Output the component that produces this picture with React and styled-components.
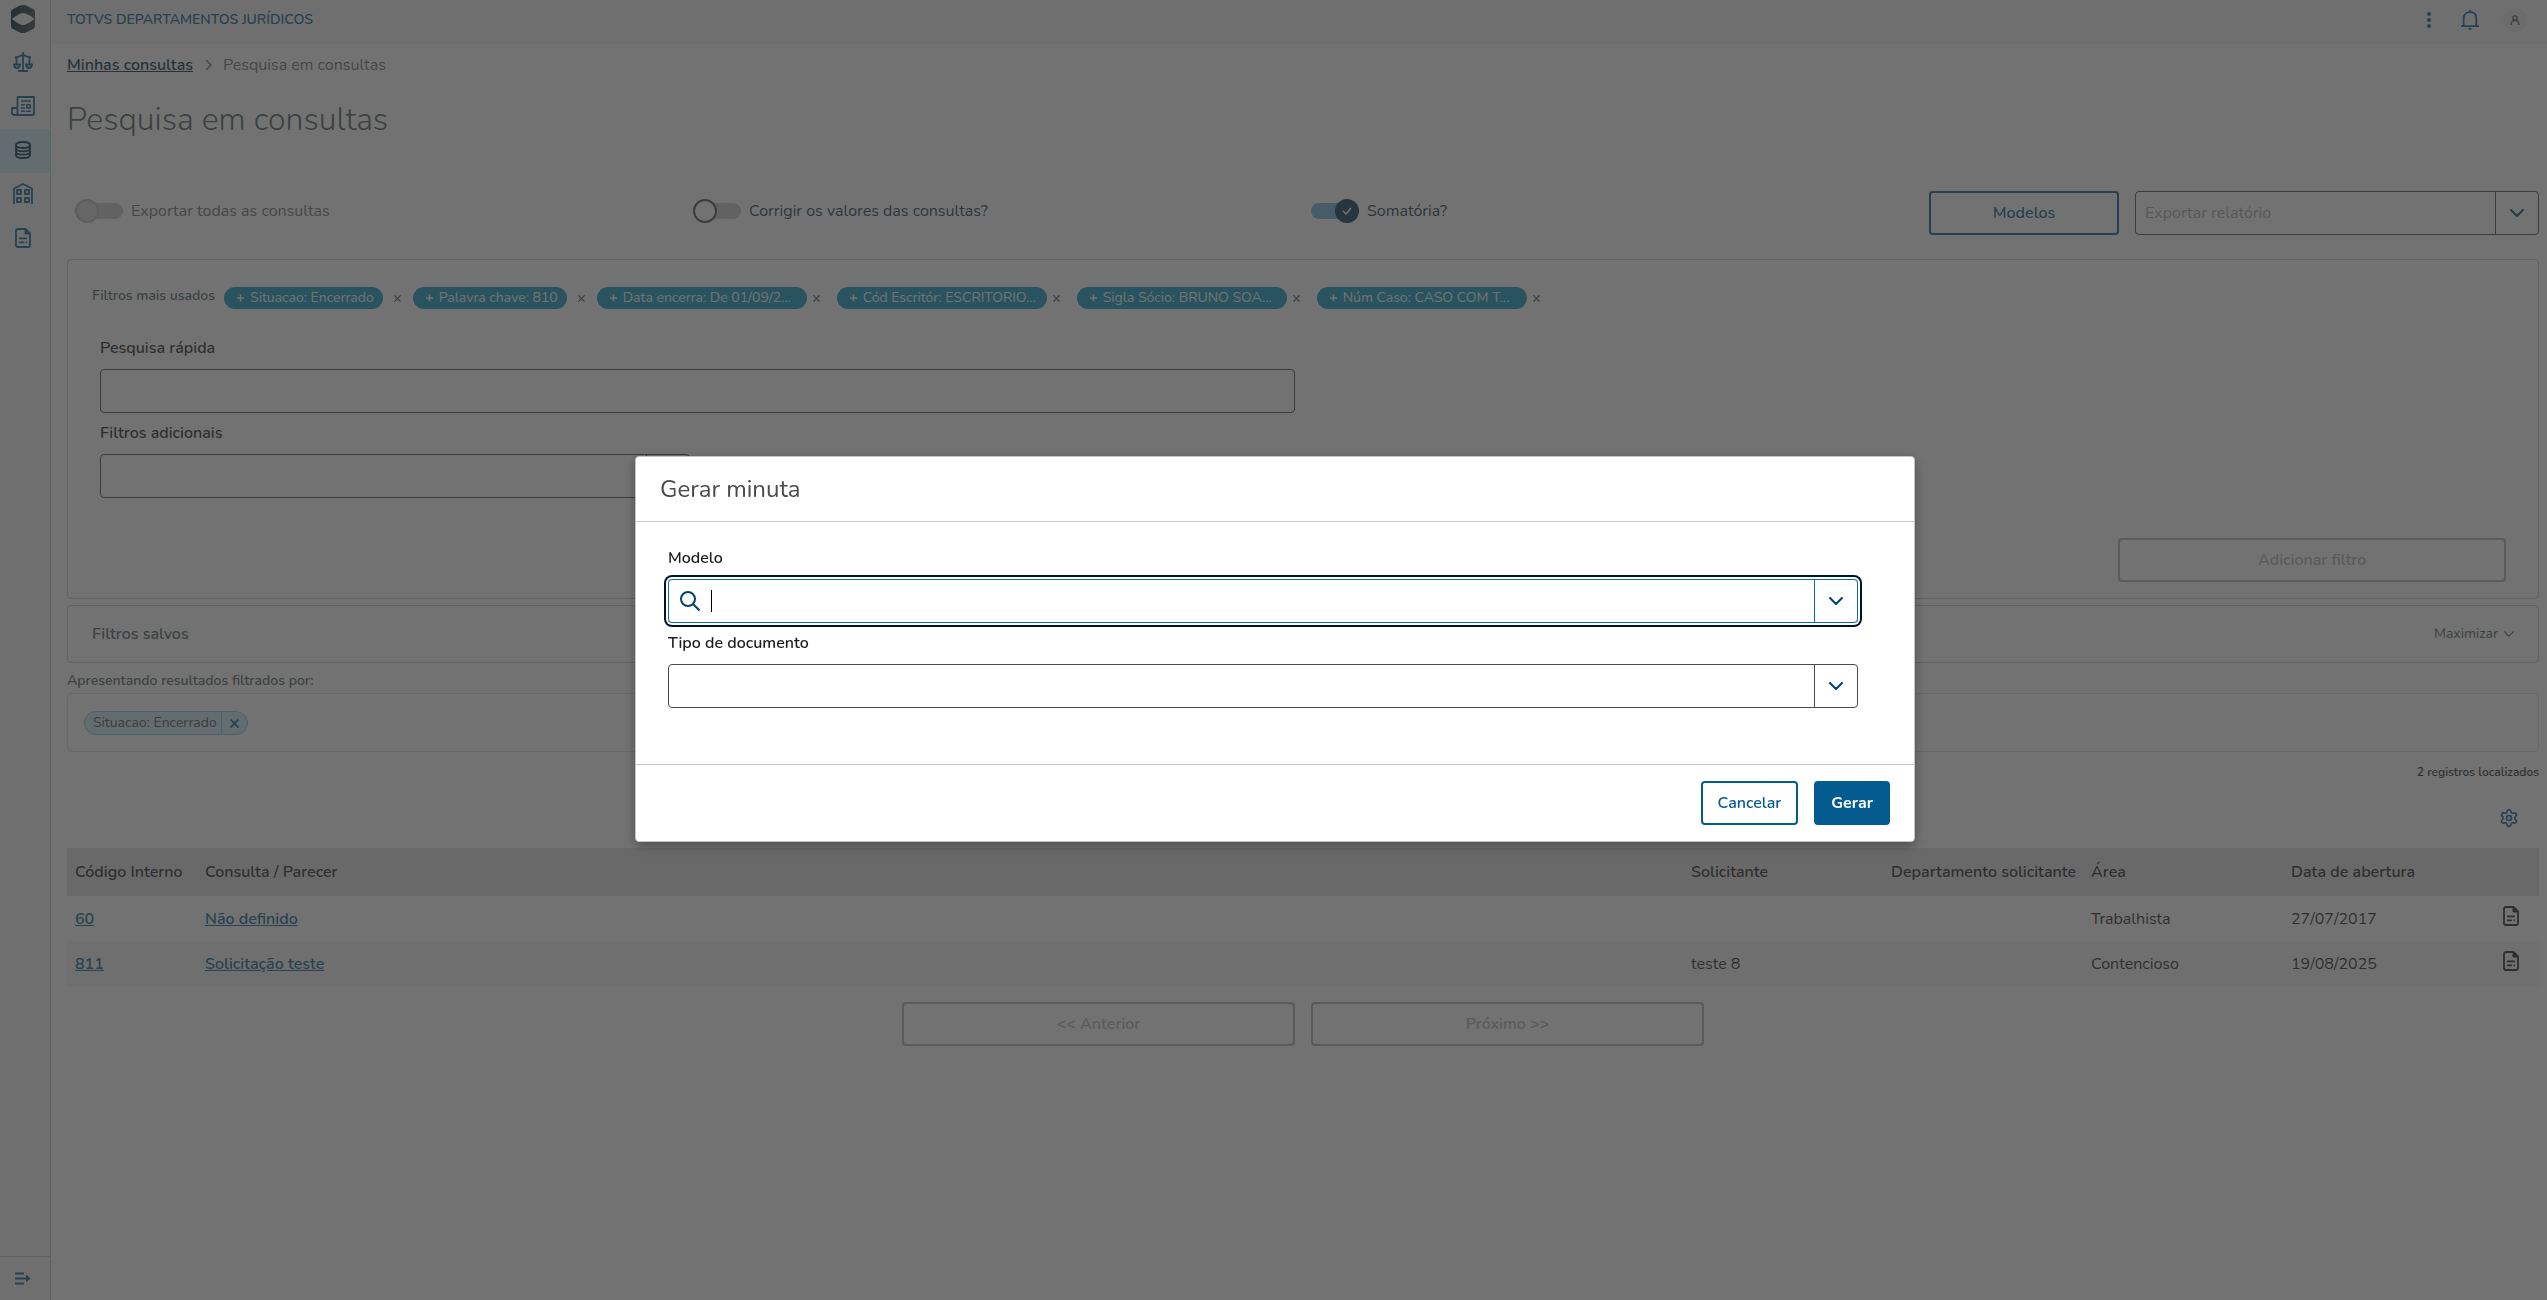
import React from 'react';
import styled, { createGlobalStyle, css } from 'styled-components';
import { Settings } from 'lucide-react';

const color = {
  link: '#045b8f',
  deep: '#002a42',
  ink: '#1d1d1d',
  text: '#4a5c60',
  muted: '#6e6e6e',
  disabled: '#b0b0b0',
  field: '#4a4a4a',
  line: '#c9c9c9',
  surface: '#f4f4f4',
  pill: '#0c9abe',
  tag: '#cbeaf6',
};

const GlobalStyle = createGlobalStyle`
  *, *::before, *::after { box-sizing: border-box; }
  body {
    margin: 0;
    background: #fff;
    color: ${color.ink};
    font-family: Nunito, 'Nunito Sans', Lato, sans-serif;
    font-size: 16px;
    line-height: 24px;
  }
  button, input, select { font: inherit; color: inherit; }
  button { cursor: pointer; }
  svg { display: block; flex: none; }
`;

const Page = styled.div`
  display: flex;
  min-height: 100vh;
`;

/* Side menu */
const Sidebar = styled.nav`
  display: flex;
  flex-direction: column;
  flex: none;
  width: 51px;
  background: ${color.surface};
  border-right: 1px solid ${color.line};
`;
const Brand = styled.div`
  display: flex;
  justify-content: center;
  align-items: center;
  height: 41px;
  padding: 0 4px 3px 0;
`;
const MenuLink = styled.a`
  display: flex;
  justify-content: center;
  align-items: center;
  height: 44px;
  padding: 0 4px 3px 0;
  color: ${(p) => (p.$active ? color.deep : color.link)};
  background: ${(p) => (p.$active ? color.tag : 'transparent')};
  border-radius: 0 4px 4px 0;
`;
const Expand = styled.button`
  display: flex;
  justify-content: center;
  align-items: center;
  height: 44px;
  margin-top: auto;
  padding: 0 4px 0 0;
  border: 0;
  border-top: 1px solid ${color.line};
  background: none;
  color: ${color.link};
`;

/* Top bar */
const Main = styled.div`
  flex: 1;
  min-width: 0;
`;
const TopBar = styled.header`
  display: flex;
  justify-content: space-between;
  align-items: center;
  height: 44px;
  padding: 0 20px 4px 16px;
  background: ${color.surface};
`;
const Product = styled.strong`
  color: ${color.link};
  font-size: 14px;
  font-weight: 600;
`;
const Actions = styled.div`
  display: flex;
  align-items: center;
  gap: 24px;
  color: ${color.link};
`;
const IconButton = styled.button`
  display: flex;
  justify-content: center;
  min-width: ${(p) => (p.$wide ? '16px' : '0')};
  padding: 0;
  border: 0;
  background: none;
  color: ${(p) => (p.$dark ? color.ink : color.link)};
`;
const Avatar = styled.span`
  display: flex;
  justify-content: center;
  align-items: center;
  width: 24px;
  height: 24px;
  border-radius: 50%;
  background: #ebebeb;
  color: ${color.field};
`;

/* Page heading */
const Content = styled.main`
  padding: 9px 8px 16px 16px;
`;
const Breadcrumb = styled.nav`
  display: flex;
  align-items: center;
  gap: 11px;
  color: ${color.muted};
`;
const Link = styled.a`
  color: ${(p) => (p.$deep ? color.deep : color.link)};
  font-weight: 600;
`;
const Title = styled.h1`
  margin: 19px 0 47px;
  color: ${color.text};
  font-size: 32px;
  font-weight: 300;
  line-height: 48px;
`;

/* Toolbar with switches */
const Toolbar = styled.div`
  display: grid;
  grid-template-columns: repeat(4, minmax(0, 1fr));
  margin-bottom: 24px;
`;
const SwitchLabel = styled.label`
  display: flex;
  align-items: center;
  gap: 8px;
  height: 40px;
  padding-left: 8px;
  color: ${(p) => (p.$disabled ? color.muted : '#16384c')};
`;
const Switch = styled.span`
  display: flex;
  align-items: center;
  justify-content: ${(p) => (p.$on ? 'flex-end' : 'flex-start')};
  width: 48px;
  height: 16px;
  border-radius: 8px;
  background: ${(p) => (p.$on ? '#6bb8e0' : '#cacaca')};
`;
const Knob = styled.span`
  display: flex;
  justify-content: center;
  align-items: center;
  width: 24px;
  height: 24px;
  border-radius: 50%;
  color: #fff;
  ${(p) =>
    p.$on
      ? css`background: #003350;`
      : p.$disabled
      ? css`background: #d6d6d6; border: 2px solid #bbb;`
      : css`background: #fff; border: 2px solid ${color.field};`}
`;
const HiddenCheck = styled.input`
  position: absolute;
  width: 1px;
  height: 1px;
  margin: 0;
  opacity: 0;
`;
const ToolbarActions = styled.div`
  display: grid;
  grid-template-columns: 190fr 404fr;
  gap: 16px;
  padding-left: 8px;
`;
const Button = styled.button`
  height: 44px;
  padding: 0 15px;
  border: 2px solid ${color.link};
  border-radius: 4px;
  background: ${(p) => (p.$primary ? color.link : 'transparent')};
  color: ${(p) => (p.$primary ? '#fff' : color.link)};
  font-weight: ${(p) => (p.$primary ? 700 : 600)};
  &:disabled {
    border-color: ${color.disabled};
    color: ${color.disabled};
    cursor: default;
  }
`;

/* Form fields */
const Field = styled.div`
  display: flex;
  flex-direction: column;
  gap: 9px;
  grid-column: ${(p) => p.$column || 'auto'};
`;
const Label = styled.label`
  font-weight: 600;
`;
const Box = styled.div`
  display: flex;
  align-items: center;
  height: 44px;
  border: 1px solid ${(p) => (p.$focus ? '#0c6c9c' : color.field)};
  border-radius: 4px;
  color: ${(p) => (p.$placeholder ? '#a8a8a8' : color.ink)};
  ${(p) => p.$focus && css`box-shadow: 0 0 0 2px #fff, 0 0 0 4px #001429;`}
`;
const inner = css`
  flex: 1;
  align-self: stretch;
  min-width: 0;
  padding: 0 9px;
  border: 0;
  outline: 0;
  background: transparent;
`;
const Input = styled.input`
  ${inner}
`;
const Select = styled.select`
  ${inner}
  appearance: none;
`;
const Toggle = styled.button`
  display: flex;
  justify-content: center;
  align-items: center;
  align-self: stretch;
  width: 43px;
  padding: 0;
  border: 0;
  border-left: 1px solid ${(p) => (p.$focus ? '#0c6c9c' : color.field)};
  background: none;
  color: #01436b;
`;
const SearchMark = styled.span`
  padding: 0 11px;
  color: #01436b;
`;
const Caret = styled.span`
  width: 1px;
  height: 22px;
  background: #000;
`;

/* Panels */
const Panel = styled.section`
  padding: 27px 24px 16px;
  border: 1px solid ${color.line};
  border-radius: 4px;
`;
const PillRow = styled.div`
  display: flex;
  align-items: center;
  height: 22px;
  margin-bottom: 27px;
  font-size: 14px;
`;
const PillTitle = styled.h2`
  margin: 0;
  padding: 0 9px 4px 0;
  color: ${color.text};
  font-size: 14px;
  font-weight: 600;
  line-height: 20px;
`;
const Pill = styled.button`
  display: flex;
  align-items: center;
  gap: 6px;
  height: 22px;
  width: ${(p) => (p.$clipped ? '210px' : 'auto')};
  padding: 0 9px 0 13px;
  border: 0;
  border-radius: 11px;
  background: ${color.pill};
  color: #fff;
  white-space: nowrap;
`;
const PillClose = styled.button`
  display: flex;
  justify-content: ${(p) => (p.$clipped ? 'flex-start' : 'center')};
  width: 30px;
  padding: 0 6px;
  border: 0;
  background: none;
  color: ${color.field};
`;
const FieldGrid = styled.div`
  display: grid;
  grid-template-columns: repeat(12, minmax(0, 1fr));
  gap: 8px 16px;
  padding: 0 8px;
`;
const AddRow = styled(FieldGrid)`
  margin-top: 40px;
  & > button { grid-column: 11 / -1; }
`;
const SavedPanel = styled.section`
  display: flex;
  justify-content: space-between;
  align-items: center;
  height: 58px;
  margin: 6px 0 8px;
  padding: 0 24px;
  border: 1px solid ${color.line};
  border-radius: 4px;
`;
const SavedTitle = styled.h2`
  margin: 0;
  color: ${color.text};
  font-size: 16px;
  font-weight: 600;
`;
const Maximize = styled.button`
  display: flex;
  align-items: center;
  gap: 6px;
  padding: 0;
  border: 0;
  background: none;
  color: ${color.text};
  font-size: 14px;
`;
const AppliedTitle = styled.h2`
  margin: 0 0 2px;
  color: ${color.text};
  font-size: 14px;
  font-weight: 600;
  line-height: 20px;
`;
const Applied = styled.div`
  display: flex;
  align-items: flex-start;
  height: 59px;
  padding: 17px 16px;
  border: 1px solid #e0e0e0;
  border-radius: 4px;
`;
const Tag = styled.span`
  display: inline-flex;
  align-items: center;
  height: 24px;
  border: 1px solid #86c5e5;
  border-radius: 12px;
  background: ${color.tag};
  color: ${color.field};
  font-size: 14px;
  padding-left: 8px;
`;
const TagClose = styled.button`
  display: flex;
  justify-content: center;
  align-items: center;
  align-self: stretch;
  width: 26px;
  margin-left: 4px;
  padding: 0;
  border: 0;
  border-left: 1px solid #86c5e5;
  background: none;
  color: ${color.link};
`;
const Count = styled.p`
  margin: 10px 0 26px;
  color: ${color.ink};
  font-size: 12px;
  font-weight: 600;
  line-height: 20px;
  text-align: right;
`;
const TableTools = styled.div`
  display: flex;
  justify-content: flex-end;
  padding: 0 20px 20px;
`;

/* Table */
const Table = styled.table`
  width: 100%;
  border-collapse: collapse;
  table-layout: fixed;
`;
const Col = styled.col`
  width: ${(p) => p.$w || 'auto'};
`;
const Th = styled.th`
  height: 48px;
  padding: 0 8px;
  background: #e2e2e2;
  color: ${color.ink};
  font-weight: 600;
  text-align: left;
  white-space: nowrap;
`;
const Row = styled.tr`
  &:nth-child(even) { background: ${color.surface}; }
`;
const Td = styled.td`
  height: 45px;
  padding: 0 8px;
`;
const DocCell = styled(Td)`
  padding: 0 16px 5px 20px;
`;
const Pager = styled.div`
  display: grid;
  grid-template-columns: repeat(2, minmax(0, 393px));
  justify-content: center;
  gap: 16px;
  margin-top: 16px;
`;

/* Dialog */
const Overlay = styled.div`
  position: fixed;
  inset: 0;
  display: flex;
  justify-content: center;
  align-items: center;
  padding: 0 0 2px 3px;
  background: rgba(54, 54, 54, 0.7);
`;
const Dialog = styled.div`
  width: 100%;
  max-width: 1280px;
  border: 1px solid #c4c4c4;
  border-radius: 4px;
  background: #fff;
  box-shadow: 0 4px 12px rgba(0, 0, 0, 0.3);
`;
const DialogTitle = styled.h2`
  margin: 0;
  padding: 16px 24px;
  border-bottom: 1px solid ${color.line};
  color: ${color.field};
  font-size: 24px;
  font-weight: 400;
  line-height: 32px;
`;
const DialogBody = styled.div`
  display: grid;
  gap: 8px;
  padding: 24px 56px 56px 32px;
`;
const DialogFooter = styled.div`
  display: flex;
  justify-content: flex-end;
  gap: 16px;
  padding: 16px 24px;
  border-top: 1px solid ${color.line};
`;

/* Icons */
const Svg = ({ w, h, sw = 2, children }) => (
  <svg width={w} height={h} viewBox={`0 0 ${w} ${h}`} fill="none" stroke="currentColor" strokeWidth={sw} strokeLinejoin="round" aria-hidden="true">
    {children}
  </svg>
);
const Logo = () => (
  <svg width="24" height="28" viewBox="0 0 24 28" aria-hidden="true">
    <defs>
      <linearGradient id="brand" x1="0" y1="0" x2="1" y2="0">
        <stop offset="0" stopColor="#002233" />
        <stop offset="1" stopColor="#3c4448" />
      </linearGradient>
    </defs>
    <path fill="url(#brand)" fillRule="evenodd" d="M0 7Q0 5 2 4L9 .6Q12-.6 15 .6L22 4Q24 5 24 7V21Q24 23 22 24L15 27.4Q12 28.6 9 27.4L2 24Q0 23 0 21ZM1 14Q6 18 9.500 19.500Q12 20.500 14.500 19.500Q19 18 23.500 14Q19 10 14.500 8.500Q12 7.500 9.500 8.500Q6 10 1 14Z" />
  </svg>
);
const ScaleIcon = () => (
  <Svg w={20} h={20} sw={1.8}>
    <path d="M10 0V19M5 19H15M2 5.500Q7 5 10 2.500Q13 5 18 5.500M3.500 5V12M16.500 5V12M.9 12.500H7.100Q6.500 16 4 16Q1.500 16 .9 12.500ZM12.900 12.500H19.100Q18.500 16 16 16Q13.500 16 12.900 12.500Z" />
  </Svg>
);
const NewsIcon = () => (
  <Svg w={24} h={20} sw={1.8}>
    <path d="M6.500 12V1H23V17Q23 19 21 19H3.500Q1 19 1 16.500V12H6.500V16.500Q6.500 19 4 19" />
    <path d="M10 5H20M10 8.700H14M10 12H14M10 15.300H14M15.300 8.700H20M15.300 12H20M15.300 15.300H20M16 8V12.500M19.300 8V12.500" strokeWidth="1.5" />
  </Svg>
);
const DatabaseIcon = () => (
  <Svg w={16} h={18} sw={1.8}>
    <path d="M1 4Q1 1 8 1T15 4Q15 7 8 7T1 4V14Q1 17 8 17T15 14V4M1 7.500Q1 10.300 8 10.300T15 7.500M1 11Q1 13.700 8 13.700T15 11" />
  </Svg>
);
const BuildingIcon = () => (
  <Svg w={20} h={21} sw={1.8}>
    <path d="M1 21V5.500L10 1L19 5.500V21M4 7H8V11H4ZM12 7H16V11H12ZM4 15H8V19H4ZM12 15H16V19H12Z" />
  </Svg>
);
const DocIcon = () => (
  <Svg w={16} h={20} sw={1.8}>
    <path d="M10.500 1H3Q1 1 1 3V17Q1 19 3 19H13Q15 19 15 17V5.500Z" />
    <path d="M10 1V6H15L10.500 1Z" fill="currentColor" strokeWidth="1" />
    <path d="M4 10.300H12M4 14.300H9M10.500 14.300H12" />
  </Svg>
);
const ExpandIcon = () => (
  <Svg w={16} h={13}>
    <path d="M0 1.500H9M0 6.500H13M0 11.500H9" />
    <path d="M11 2.500V10.500L15.500 6.500Z" fill="currentColor" stroke="none" />
  </Svg>
);
const DotsIcon = () => (
  <svg width="4" height="16" viewBox="0 0 4 16" fill="currentColor" aria-hidden="true">
    <circle cx="2" cy="2" r="2" /><circle cx="2" cy="8" r="2" /><circle cx="2" cy="14" r="2" />
  </svg>
);
const BellIcon = () => (
  <Svg w={18} h={20} sw={1.8}>
    <path d="M0 16.100H18M2.700 16V8.500Q2.700 2.200 9 2.200T15.300 8.500V16" />
    <path d="M7.500 2Q7.500 0 9 0T10.500 2ZM7 18H11Q10.500 20 9 20T7 18Z" fill="currentColor" stroke="none" />
  </Svg>
);
const UserIcon = () => (
  <Svg w={10} h={10} sw={1.2}>
    <circle cx="5" cy="3" r="2.2" />
    <path d="M1 10Q1.200 5.400 5 5.400T9 10" />
  </Svg>
);
const ChevronDown = ({ w = 14, h = 8, sw = 2 }) => (
  <svg width={w} height={h} viewBox="0 0 14 8" fill="none" stroke="currentColor" strokeWidth={sw} strokeLinecap="round" strokeLinejoin="round" aria-hidden="true">
    <path d="M1 1L7 7L13 1" />
  </svg>
);
const ChevronRight = () => (
  <Svg w={8} h={10} sw={1.5}><path d="M2 0L7 5L2 10" /></Svg>
);
const SearchIcon = () => (
  <Svg w={20} h={20}>
    <circle cx="8" cy="8" r="7" /><path d="M13 13L19.500 19.500" />
  </Svg>
);
const CheckIcon = () => (
  <Svg w={10} h={8} sw={1.6}><path d="M1 4L4 7L9 1" /></Svg>
);
const CrossIcon = ({ size = 7, sw = 1.4 }) => (
  <svg width={size} height={size} viewBox="0 0 8 8" fill="none" stroke="currentColor" strokeWidth={sw} aria-hidden="true">
    <path d="M.5.5L7.500 7.500M7.500.5L.5 7.500" />
  </svg>
);
const PlusIcon = () => (
  <Svg w={7} h={8} sw={1.5}><path d="M0 4H7M3.500 .5V7.500" /></Svg>
);

const menu = [
  ['Processos', ScaleIcon],
  ['Publicações', NewsIcon],
  ['Consultas', DatabaseIcon],
  ['Empresas', BuildingIcon],
  ['Documentos', DocIcon],
];
const pills = [
  ['Situacao: Encerrado', false],
  ['Palavra chave: 810', false],
  ['Data encerra: De 01/09/2...', true],
  ['Cód Escritór: ESCRITORIO...', true],
  ['Sigla Sócio: BRUNO SOA...', true],
  ['Núm Caso: CASO COM T...', true],
];
const rows = [
  { code: '60', name: 'Não definido', requester: '', dept: '', area: 'Trabalhista', date: '27/07/2017' },
  { code: '811', name: 'Solicitação teste', requester: 'teste 8', dept: '', area: 'Contencioso', date: '19/08/2025' },
];

const SwitchField = ({ label, on, disabled }) => (
  <SwitchLabel $disabled={disabled}>
    <HiddenCheck type="checkbox" role="switch" defaultChecked={on} disabled={disabled} />
    <Switch $on={on}>
      <Knob $on={on} $disabled={disabled}>{on && <CheckIcon />}</Knob>
    </Switch>
    {label}
  </SwitchLabel>
);

const Dropdown = ({ id, label, placeholder }) => (
  <Box $placeholder={!!placeholder}>
    <Select id={id} aria-label={label} defaultValue="">
      <option value="">{placeholder || ''}</option>
    </Select>
    <Toggle type="button" aria-label="Abrir lista"><ChevronDown /></Toggle>
  </Box>
);

export default function App() {
  return (
    <>
      <GlobalStyle />
      <Page>
        <Sidebar aria-label="Menu">
          <Brand><Logo /></Brand>
          {menu.map(([name, Icon]) => (
            <MenuLink key={name} href="#" aria-label={name} $active={name === 'Consultas'}><Icon /></MenuLink>
          ))}
          <Expand type="button" aria-label="Expandir menu"><ExpandIcon /></Expand>
        </Sidebar>
        <Main>
          <TopBar>
            <Product>TOTVS DEPARTAMENTOS JURÍDICOS</Product>
            <Actions>
              <IconButton type="button" $wide aria-label="Mais opções"><DotsIcon /></IconButton>
              <IconButton type="button" aria-label="Notificações"><BellIcon /></IconButton>
              <Avatar><UserIcon /></Avatar>
            </Actions>
          </TopBar>
          <Content>
            <Breadcrumb aria-label="Trilha">
              <Link href="#" $deep>Minhas consultas</Link>
              <ChevronRight />
              <span>Pesquisa em consultas</span>
            </Breadcrumb>
            <Title>Pesquisa em consultas</Title>

            <Toolbar>
              <SwitchField label="Exportar todas as consultas" disabled />
              <SwitchField label="Corrigir os valores das consultas?" />
              <SwitchField label="Somatória?" on />
              <ToolbarActions>
                <Button type="button">Modelos</Button>
                <Dropdown label="Exportar relatório" placeholder="Exportar relatório" />
              </ToolbarActions>
            </Toolbar>

            <Panel>
              <PillRow>
                <PillTitle>Filtros mais usados</PillTitle>
                {pills.map(([text, clipped]) => (
                  <React.Fragment key={text}>
                    <Pill type="button" $clipped={clipped}><PlusIcon />{text}</Pill>
                    <PillClose type="button" aria-label="Remover" $clipped={clipped}><CrossIcon /></PillClose>
                  </React.Fragment>
                ))}
              </PillRow>
              <FieldGrid>
                <Field $column="1 / 7">
                  <Label htmlFor="quick">Pesquisa rápida</Label>
                  <Box><Input id="quick" type="text" /></Box>
                </Field>
                <Field $column="1 / 4">
                  <Label htmlFor="extra">Filtros adicionais</Label>
                  <Dropdown id="extra" />
                </Field>
              </FieldGrid>
              <AddRow><Button type="button" disabled>Adicionar filtro</Button></AddRow>
            </Panel>

            <SavedPanel>
              <SavedTitle>Filtros salvos</SavedTitle>
              <Maximize type="button">Maximizar <ChevronDown w={10} h={6} sw={1.6} /></Maximize>
            </SavedPanel>

            <AppliedTitle>Apresentando resultados filtrados por:</AppliedTitle>
            <Applied>
              <Tag>
                Situacao: Encerrado
                <TagClose type="button" aria-label="Remover filtro"><CrossIcon size={9} sw={1.6} /></TagClose>
              </Tag>
            </Applied>
            <Count>2 registros localizados</Count>
            <TableTools>
              <IconButton type="button" aria-label="Configurar colunas"><Settings size={20} strokeWidth={2} /></IconButton>
            </TableTools>

            <Table>
              <colgroup>
                <Col $w="130px" /><Col /><Col $w="200px" /><Col $w="200px" /><Col $w="200px" /><Col $w="200px" /><Col $w="56px" />
              </colgroup>
              <thead>
                <tr>
                  <Th>Código Interno</Th><Th>Consulta / Parecer</Th><Th>Solicitante</Th>
                  <Th>Departamento solicitante</Th><Th>Área</Th><Th>Data de abertura</Th><Th aria-label="Ações" />
                </tr>
              </thead>
              <tbody>
                {rows.map((r) => (
                  <Row key={r.code}>
                    <Td><Link href="#">{r.code}</Link></Td>
                    <Td><Link href="#">{r.name}</Link></Td>
                    <Td>{r.requester}</Td>
                    <Td>{r.dept}</Td>
                    <Td>{r.area}</Td>
                    <Td>{r.date}</Td>
                    <DocCell><IconButton type="button" $dark aria-label="Gerar minuta"><DocIcon /></IconButton></DocCell>
                  </Row>
                ))}
              </tbody>
            </Table>
            <Pager>
              <Button type="button" disabled>&lt;&lt; Anterior</Button>
              <Button type="button" disabled>Próximo &gt;&gt;</Button>
            </Pager>
          </Content>
        </Main>
      </Page>

      <Overlay>
        <Dialog role="dialog" aria-modal="true" aria-labelledby="dialog-title">
          <DialogTitle id="dialog-title">Gerar minuta</DialogTitle>
          <DialogBody>
            <Field>
              <Label htmlFor="model">Modelo</Label>
              <Box $focus>
                <SearchMark><SearchIcon /></SearchMark>
                <Caret />
                <Input id="model" type="text" />
                <Toggle type="button" $focus aria-label="Abrir lista"><ChevronDown /></Toggle>
              </Box>
            </Field>
            <Field>
              <Label htmlFor="doctype">Tipo de documento</Label>
              <Dropdown id="doctype" />
            </Field>
          </DialogBody>
          <DialogFooter>
            <Button type="button">Cancelar</Button>
            <Button type="button" $primary>Gerar</Button>
          </DialogFooter>
        </Dialog>
      </Overlay>
    </>
  );
}
